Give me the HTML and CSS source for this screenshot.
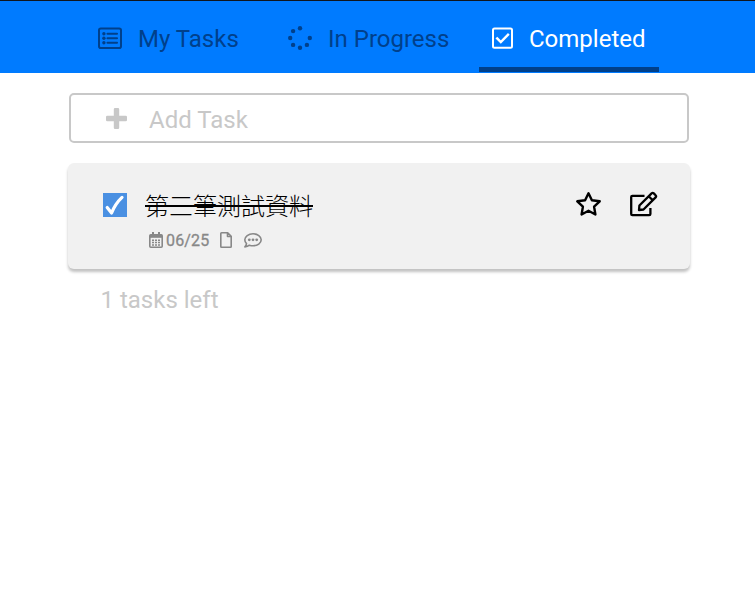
FILE: index.html
```html
<!DOCTYPE html>
<html lang="zh-Hant">
<head>
<meta charset="utf-8">
<title>Todo List</title>
<link rel="stylesheet" href="styles.css">
</head>
<body>
<header class="header">
  <nav class="tabs">
    <a class="tab tab-tasks">
      <svg class="tab-icon" width="24" height="24" viewBox="0 0 24 24" fill="none" stroke="currentColor"><rect x="1" y="2.5" width="22" height="19.5" rx="1.8" stroke-width="2"/><path d="M9.5 7.8H19M9.5 12.3H19M9.5 16.8H19" stroke-width="2.1" stroke-linecap="round"/><g fill="currentColor" stroke="none"><circle cx="5.9" cy="7.8" r="1.7"/><circle cx="5.9" cy="12.3" r="1.7"/><circle cx="5.9" cy="16.8" r="1.7"/></g></svg>
      <span>My Tasks</span>
    </a>
    <a class="tab tab-progress">
      <svg class="tab-icon" width="24" height="24" viewBox="0 0 24 24" fill="currentColor"><circle cx="12" cy="2.2" r="2.2"/><circle cx="5.1" cy="5.1" r="2.2"/><circle cx="2.2" cy="12" r="2.2"/><circle cx="5.1" cy="18.9" r="2.2"/><circle cx="12" cy="21.8" r="2.2"/><circle cx="18.9" cy="18.9" r="2.2"/><circle cx="21.8" cy="12" r="2.2"/></svg>
      <span>In Progress</span>
    </a>
    <a class="tab tab-completed active">
      <svg class="tab-icon" width="21" height="24" viewBox="0 0 21 24" fill="none" stroke="currentColor"><rect x="1" y="2.5" width="19" height="19.3" rx="1.5" stroke-width="2"/><path d="M5.2 12.4 8.8 16 16 8.7" stroke-width="2.4" stroke-linecap="square" stroke-linejoin="miter"/></svg>
      <span>Completed</span>
    </a>
  </nav>
</header>
<main class="main">
  <div class="add-task">
    <svg class="plus" width="21" height="21" viewBox="0 0 21 21" fill="currentColor"><path d="M9 0h3a1.2 1.2 0 0 1 1.2 1.2v6.6h6.6A1.2 1.2 0 0 1 21 9v3a1.2 1.2 0 0 1-1.2 1.2h-6.6v6.6A1.2 1.2 0 0 1 12 21H9a1.2 1.2 0 0 1-1.2-1.2v-6.6H1.2A1.2 1.2 0 0 1 0 12V9a1.2 1.2 0 0 1 1.2-1.2h6.6V1.2A1.2 1.2 0 0 1 9 0z"/></svg>
    <span>Add Task</span>
  </div>
  <section class="card">
    <svg class="checkbox" width="24" height="24" viewBox="0 0 24 24"><path fill="#4a90e2" d="M0 0h24v24H0z"/><path d="M4.2 14.4 8.6 20Q12.2 10.8 19 4.4" fill="none" stroke="#fff" stroke-width="3.2" stroke-linecap="round" stroke-linejoin="round"/></svg>
    <div class="content">
      <div class="title">第三筆測試資料</div>
      <div class="meta">
        <svg class="calendar" width="14" height="16" viewBox="0 0 14 16" fill="none" stroke="currentColor"><rect x=".8" y="2.8" width="12.4" height="12.4" rx="1" stroke-width="1.6"/><path d="M1 4.3h12" stroke-width="3"/><path d="M4 0v4M10 0v4" stroke-width="2"/><path d="M3 8.3h8M3 10.6h8M3 12.9h8" stroke-width="1.5" stroke-dasharray="2 1"/></svg>
        <span class="date">06/25</span>
        <svg class="file" width="12" height="16" viewBox="0 0 12 16" fill="none" stroke="currentColor" stroke-width="1.6" stroke-linejoin="round"><path d="M.8 1.5Q.8.8 1.5.8H7.7L11.2 4.3V14.5Q11.2 15.2 10.5 15.2H1.5Q.8 15.2.8 14.5zM7.5 1V4.5H11"/></svg>
        <svg class="comment" width="18" height="15" viewBox="0 0 18 15" fill="none" stroke="currentColor"><path d="M9 .8C13.5.8 17.2 3.5 17.2 6.8S13.5 12.8 9 12.8C7.8 12.8 6.5 12.6 5.4 12.2Q3.6 13.8.9 13.9Q2.2 12.5 2.5 10.6C1.4 9.6.8 8.3.8 6.8.8 3.5 4.5.8 9 .8z" stroke-width="1.6" stroke-linejoin="round"/><g fill="currentColor" stroke="none"><circle cx="5.3" cy="6.8" r="1.4"/><circle cx="9" cy="6.8" r="1.4"/><circle cx="12.7" cy="6.8" r="1.4"/></g></svg>
      </div>
    </div>
    <svg class="star" width="26" height="25" viewBox="0 0 26 25" fill="none" stroke="#000" stroke-width="2.4" stroke-linejoin="round"><path d="M12.5 2.3 15.9 9.2 23.7 10.3 18.1 15.7 19.4 23.5 12.5 19.8 5.6 23.5 6.9 15.7 1.3 10.3 9.1 9.2z"/></svg>
    <svg class="edit" width="28" height="26" viewBox="0 0 28 26" fill="none" stroke="#000" stroke-width="2.3" stroke-linecap="round" stroke-linejoin="round"><path d="M14.5 4.9H2.4Q1.2 4.9 1.2 6.1V22.9Q1.2 24.1 2.4 24.1H19.2Q20.4 24.1 20.4 22.9V17.1" stroke-linecap="butt"/><path d="M9 19 9.4 14.5 21.6 2.4Q22.7 1.4 23.8 2.4L25.6 4.3Q26.6 5.3 25.6 6.4L13.5 18.5zM18.7 5.3 22.7 9.3"/></svg>
  </section>
  <p class="remaining">1 tasks left</p>
</main>
</body>
</html>
```
FILE: styles.css
```css
* { box-sizing: border-box; }

body {
  margin: 0;
  background: #fff;
  font-family: Roboto, "Noto Sans CJK TC", sans-serif;
  font-size: 24px;
}

svg { display: block; flex: none; }

.header {
  height: 73px;
  border-top: 1px solid #10161e;
  background: #007bff;
}

.tabs {
  display: flex;
  height: 71px;
  padding-left: 84px;
}

.tab {
  display: flex;
  align-items: center;
  gap: 16px;
  padding: 10px 0 0 14px;
  border-bottom: 5px solid transparent;
  color: #00408b;
  line-height: 28px;
  white-space: nowrap;
}

.tab-icon { margin-bottom: 2px; }
.tab-tasks,
.tab-progress { width: 190px; }
.tab-completed { width: 180px; margin-left: 15px; padding-left: 13px; }

.active {
  border-bottom-color: #00408b;
  color: #fff;
}

.main {
  width: 622px;
  margin: 20px 0 0 68px;
}

.add-task {
  display: flex;
  align-items: center;
  gap: 22px;
  height: 50px;
  margin: 0 1px;
  padding: 3px 0 0 35px;
  border: 2px solid #c8c8c8;
  border-radius: 5px;
  color: #c8c8c8;
}

.plus { margin-bottom: 2px; }

.card {
  display: flex;
  align-items: flex-start;
  height: 106px;
  margin-top: 20px;
  padding: 27px 32px 0 35px;
  border-radius: 6px;
  background: #f1f1f1;
  box-shadow: 0 3px 3px #c2c2c2;
}

.checkbox { margin-top: 3px; }

.content {
  flex: 1;
  margin-left: 18px;
}

.title {
  height: 30px;
  color: #000;
  font-family: "Noto Sans CJK TC", sans-serif;
  font-weight: 200;
  line-height: 30px;
  text-decoration: line-through;
  text-decoration-thickness: 2px;
}

.meta {
  display: flex;
  align-items: center;
  height: 20px;
  margin: 10px 0 0 4px;
  color: #888;
  font-size: 16px;
  letter-spacing: 0.15px;
}

.date {
  margin: 0 11px 0 3px;
  -webkit-text-stroke: 0.3px currentColor;
}
.comment { margin-left: 12px; }
.star { margin-top: 1px; }
.edit { margin: 1px 0 0 28px; }

.remaining {
  margin: 17px 0 0 32.5px;
  color: #c8c8c8;
  line-height: 28px;
}
```
